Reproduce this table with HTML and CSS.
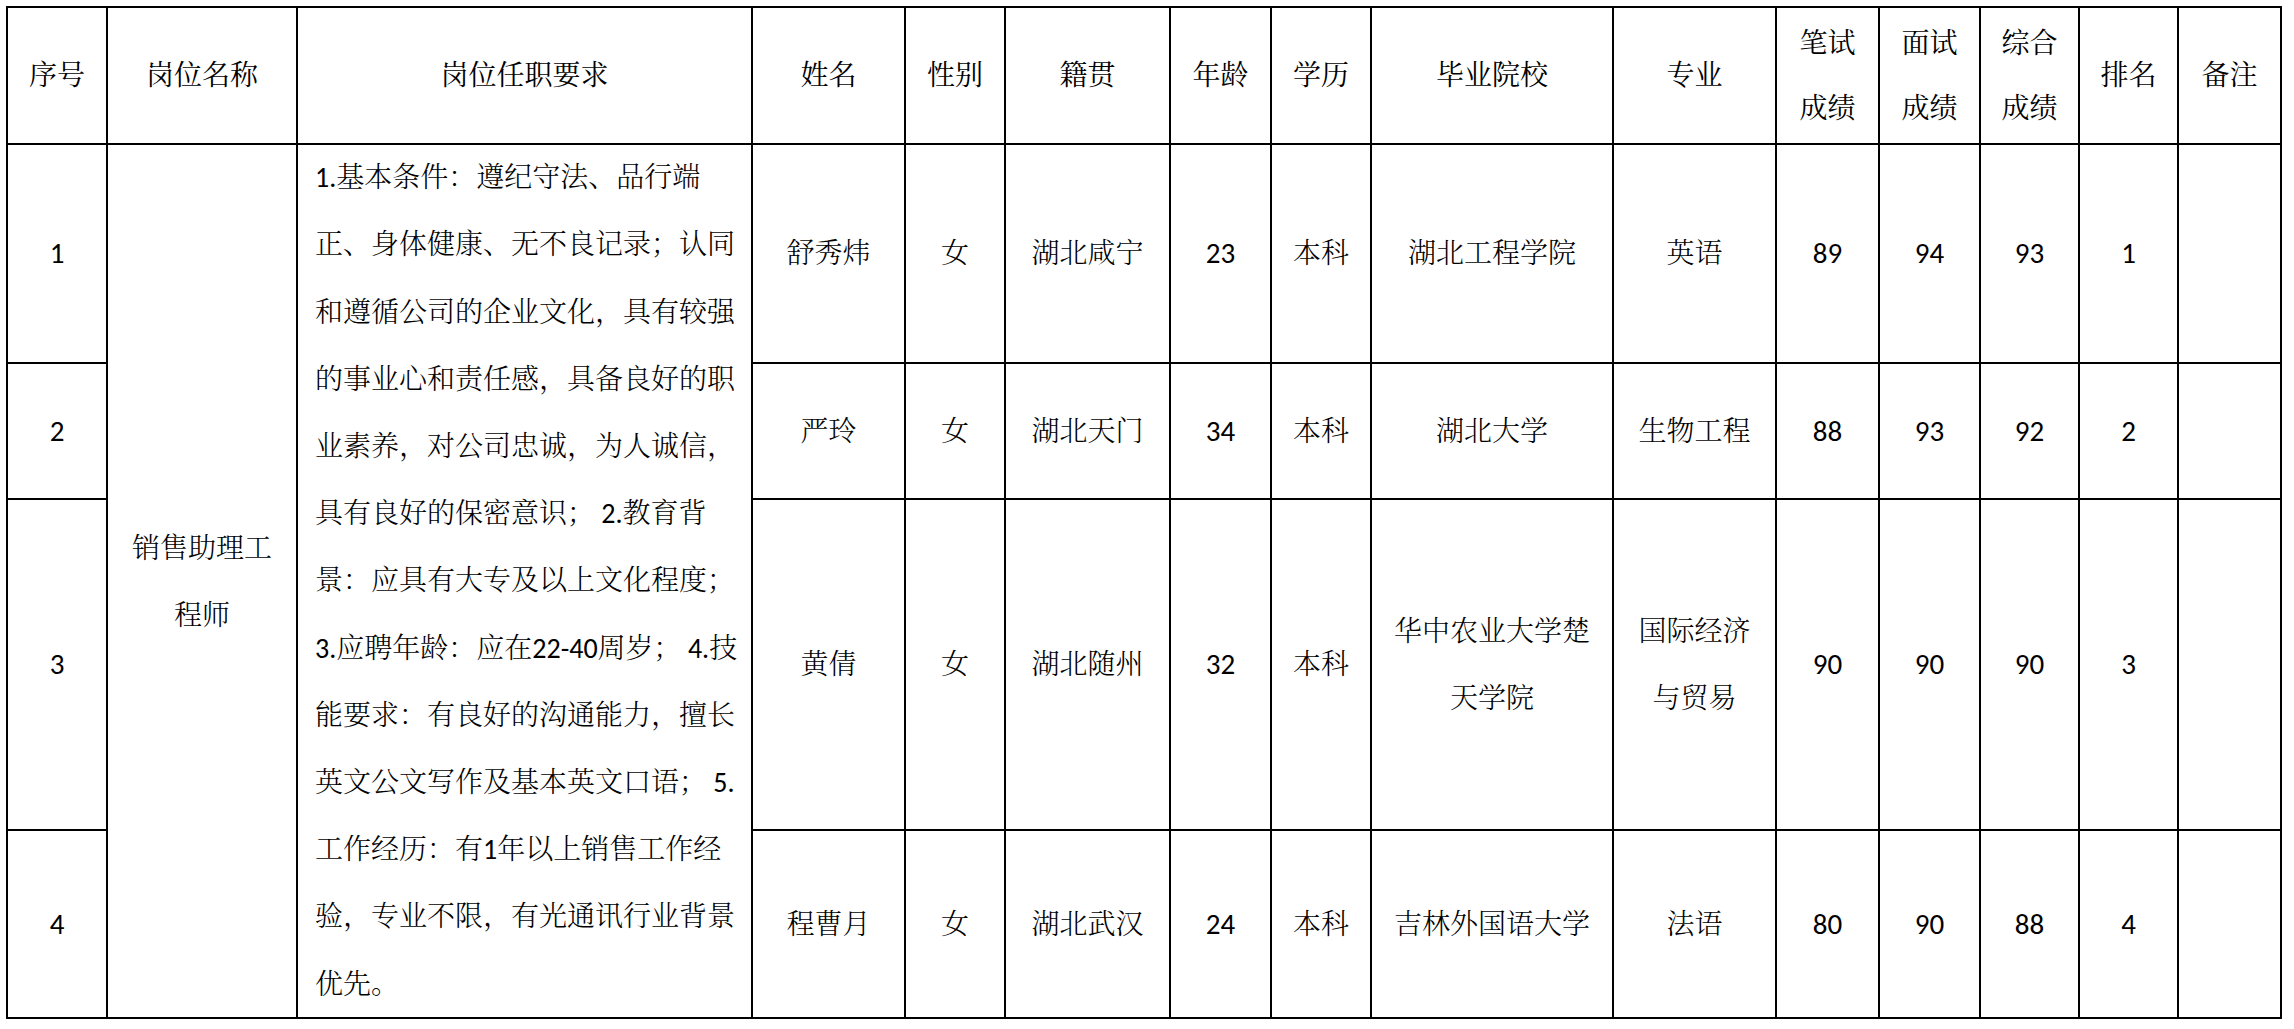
FILE: index.html
```html
<!DOCTYPE html>
<html lang="zh-CN">
<head>
<meta charset="utf-8">
<title>招聘成绩表</title>
<link rel="stylesheet" href="styles.css">
</head>
<body>
<div class="sheet">
  <div class="c h">序号</div>
  <div class="c h">岗位名称</div>
  <div class="c h">岗位任职要求</div>
  <div class="c h">姓名</div>
  <div class="c h">性别</div>
  <div class="c h">籍贯</div>
  <div class="c h">年龄</div>
  <div class="c h">学历</div>
  <div class="c h">毕业院校</div>
  <div class="c h">专业</div>
  <div class="c h two">笔试<br>成绩</div>
  <div class="c h two">面试<br>成绩</div>
  <div class="c h two">综合<br>成绩</div>
  <div class="c h">排名</div>
  <div class="c h">备注</div>

  <div class="c num r2">1</div>
  <div class="c post">销售助理工<br>程师</div>
  <div class="c req">
    <span class="ln">1.基本条件：遵纪守法、品行端</span>
    <span class="ln">正、身体健康、无不良记录；认同</span>
    <span class="ln">和遵循公司的企业文化，具有较强</span>
    <span class="ln">的事业心和责任感，具备良好的职</span>
    <span class="ln">业素养，对公司忠诚，为人诚信，</span>
    <span class="ln">具有良好的保密意识； 2.教育背</span>
    <span class="ln">景：应具有大专及以上文化程度；</span>
    <span class="ln">3.应聘年龄：应在22-40周岁； 4.技</span>
    <span class="ln">能要求：有良好的沟通能力，擅长</span>
    <span class="ln">英文公文写作及基本英文口语； 5.</span>
    <span class="ln">工作经历：有1年以上销售工作经</span>
    <span class="ln">验，专业不限，有光通讯行业背景</span>
    <span class="ln">优先。</span>
  </div>
  <div class="c">舒秀炜</div>
  <div class="c">女</div>
  <div class="c">湖北咸宁</div>
  <div class="c num">23</div>
  <div class="c">本科</div>
  <div class="c">湖北工程学院</div>
  <div class="c">英语</div>
  <div class="c num">89</div>
  <div class="c num">94</div>
  <div class="c num">93</div>
  <div class="c num">1</div>
  <div class="c"></div>

  <div class="c num">2</div>
  <div class="c">严玲</div>
  <div class="c">女</div>
  <div class="c">湖北天门</div>
  <div class="c num">34</div>
  <div class="c">本科</div>
  <div class="c">湖北大学</div>
  <div class="c">生物工程</div>
  <div class="c num">88</div>
  <div class="c num">93</div>
  <div class="c num">92</div>
  <div class="c num">2</div>
  <div class="c"></div>

  <div class="c num">3</div>
  <div class="c">黄倩</div>
  <div class="c">女</div>
  <div class="c">湖北随州</div>
  <div class="c num">32</div>
  <div class="c">本科</div>
  <div class="c two">华中农业大学楚<br>天学院</div>
  <div class="c two">国际经济<br>与贸易</div>
  <div class="c num">90</div>
  <div class="c num">90</div>
  <div class="c num">90</div>
  <div class="c num">3</div>
  <div class="c"></div>

  <div class="c num">4</div>
  <div class="c">程曹月</div>
  <div class="c">女</div>
  <div class="c">湖北武汉</div>
  <div class="c num">24</div>
  <div class="c">本科</div>
  <div class="c">吉林外国语大学</div>
  <div class="c">法语</div>
  <div class="c num">80</div>
  <div class="c num">90</div>
  <div class="c num">88</div>
  <div class="c num">4</div>
  <div class="c"></div>
</div>
</body>
</html>
```

FILE: styles.css
```css
html, body {
  margin: 0;
  padding: 0;
  background: #ffffff;
}

body {
  padding: 6px 0 0 6px;
  font-family: "Carlito", "Liberation Sans", "Noto Serif CJK SC", "Noto Sans CJK SC", sans-serif;
  font-size: 28px;
  font-weight: 300;
  color: #000000;
}

.sheet {
  display: grid;
  grid-template-columns: 100px 190px 455px 153px 100px 165px 101px 100px 242px 163px 103px 101px 99px 99px 103px;
  grid-template-rows: 137px 219px 136px 331px 188px;
  width: max-content;
  border-top: 2px solid #000;
  border-left: 2px solid #000;
}

.c {
  box-sizing: border-box;
  border-right: 2px solid #000;
  border-bottom: 2px solid #000;
  display: flex;
  align-items: center;
  justify-content: center;
  text-align: center;
  line-height: 67px;
  white-space: nowrap;
}

.h {
  font-weight: 400;
}

.h.two {
  line-height: 65px;
}

.num {
  font-family: "Carlito", "Liberation Sans", sans-serif;
  font-weight: 400;
  font-size: 29px;
}

.r2 {
  grid-column: 1;
  grid-row: 2;
}

.post {
  grid-column: 2;
  grid-row: 2 / 6;
  padding-top: 2px;
}

.req {
  grid-column: 3;
  grid-row: 2 / 6;
  flex-direction: column;
  align-items: flex-start;
  justify-content: center;
  text-align: left;
  padding: 0 17px;
  line-height: 67.2px;
}

.ln {
  display: block;
  white-space: pre;
}
```
